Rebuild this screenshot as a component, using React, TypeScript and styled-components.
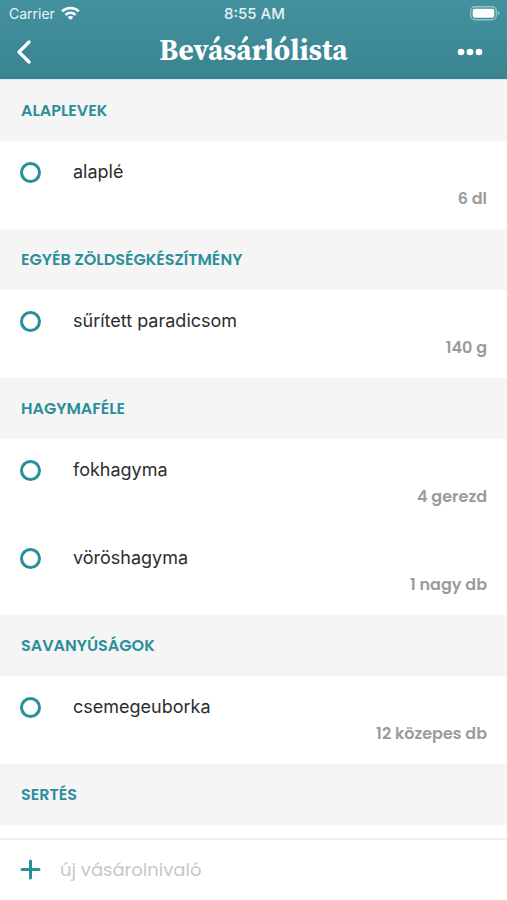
import React, { useState } from "react";
import styled, { createGlobalStyle } from "styled-components";

const teal = "#2b8f9a";
const brandFont = `Poppins, Inter, "Noto Sans", sans-serif`;
const systemFont = `Inter, "Noto Sans", sans-serif`;

const GlobalStyle = createGlobalStyle`
  *, *::before, *::after { box-sizing: border-box; }
  body { margin: 0; background: #fff; font-family: ${systemFont}; }
  button, input { font: inherit; }
`;

const Screen = styled.div`
  display: flex;
  flex-direction: column;
  height: 100vh;
  overflow: hidden;
`;

const Header = styled.header`
  flex: none;
  color: #fff;
  background: linear-gradient(#44919f, #3a8491);
  border-bottom: 1px solid #d5eaed;
`;

const StatusBar = styled.div`
  display: grid;
  grid-template-columns: 1fr auto 1fr;
  align-items: center;
  height: 27px;
  padding: 0 7px 0 9px;
  color: #e6f3f5;
`;

const Carrier = styled.span`
  display: flex;
  align-items: center;
  gap: 6px;
  font-size: 14px;
`;

const Clock = styled.time`
  font-size: 15px;
  font-weight: 500;
`;

const BatteryIcon = styled.svg`
  justify-self: end;
`;

const TitleBar = styled.div`
  display: grid;
  grid-template-columns: 48px 1fr 48px;
  align-items: center;
  height: 52px;
  padding: 0 8px 2px;
`;

const Title = styled.h1`
  margin: 0;
  padding-bottom: 4px;
  text-align: center;
  font-family: "Source Serif 4", "Source Serif Pro", "Source Serif", "Noto Serif", "Liberation Serif", serif;
  font-size: 29px;
  line-height: 40px;
  font-weight: 700;
`;

const IconButton = styled.button`
  display: flex;
  align-items: center;
  justify-content: center;
  width: 32px;
  height: 40px;
  padding: 0;
  border: 0;
  color: inherit;
  background: none;
  cursor: pointer;
`;

const MenuButton = styled(IconButton)`
  justify-self: end;
  justify-content: flex-start;
  width: 42px;
`;

const List = styled.main`
  flex: 1;
  min-height: 0;
  overflow-y: auto;
  scrollbar-width: none;
`;

const GroupTitle = styled.h2`
  display: flex;
  align-items: center;
  height: 61px;
  margin: 0;
  padding: 0 20px 0 21px;
  font-family: ${brandFont};
  font-size: 16px;
  font-weight: 600;
  text-transform: uppercase;
  color: ${teal};
  background: #f5f5f5;
`;

const Items = styled.ul`
  margin: 0;
  padding: 0;
  list-style: none;
`;

const Item = styled.li`
  display: flex;
  flex-direction: column;
  gap: 5px;
  padding: 20px 20px 19px;
`;

const ItemLabel = styled.label`
  display: flex;
  align-items: center;
  gap: 32px;
  font-size: 18px;
  line-height: 22px;
  color: #2d2d2d;
  cursor: pointer;
`;

const Check = styled.input`
  appearance: none;
  flex: none;
  width: 21px;
  height: 21px;
  margin: 0;
  border: 3px solid ${teal};
  border-radius: 50%;
  cursor: pointer;
  &:checked {
    background: ${teal};
  }
`;

const Quantity = styled.span`
  align-self: flex-end;
  font-family: ${brandFont};
  font-size: 16px;
  line-height: 22px;
  font-weight: 600;
  color: #9b9b9b;
`;

const AddBar = styled.form`
  flex: none;
  display: flex;
  align-items: center;
  gap: 19px;
  height: 62px;
  padding: 0 20px 2px;
  border-top: 2px solid #efefef;
  background: #fff;
`;

const AddButton = styled(IconButton)`
  width: 21px;
  color: ${teal};
`;

const AddInput = styled.input`
  flex: 1;
  min-width: 0;
  height: 40px;
  padding: 0;
  border: 0;
  outline: 0;
  font-family: ${brandFont};
  font-size: 18px;
  font-weight: 400;
  color: #2d2d2d;
  background: none;
  &::placeholder {
    color: #c8c8c8;
    opacity: 1;
  }
`;

type Entry = { name: string; amount: string };

const groups: { title: string; items: Entry[] }[] = [
  { title: "Alaplevek", items: [{ name: "alaplé", amount: "6 dl" }] },
  { title: "Egyéb zöldségkészítmény", items: [{ name: "sűrített paradicsom", amount: "140 g" }] },
  {
    title: "Hagymaféle",
    items: [
      { name: "fokhagyma", amount: "4 gerezd" },
      { name: "vöröshagyma", amount: "1 nagy db" },
    ],
  },
  { title: "Savanyúságok", items: [{ name: "csemegeuborka", amount: "12 közepes db" }] },
  { title: "Sertés", items: [] },
];

export default function App() {
  const [draft, setDraft] = useState("");
  return (
    <Screen>
      <GlobalStyle />
      <Header>
        <StatusBar>
          <Carrier>
            Carrier
            <svg width="19" height="15" viewBox="0 0 19 15" fill="none" stroke="#fff" strokeWidth="2.5" aria-hidden="true">
              <path d="M1.2 5.4C5.8 1 13.2 1 17.8 5.4" />
              <path d="M4.5 8.8C7.3 6.2 11.7 6.2 14.5 8.8" />
              <path d="M9.5 14 6.6 11.1C8.2 9.7 10.8 9.7 12.4 11.1Z" fill="#fff" stroke="none" />
            </svg>
          </Carrier>
          <Clock>8:55 AM</Clock>
          <BatteryIcon width="30" height="15" viewBox="0 0 30 15" aria-hidden="true">
            <rect x="0.75" y="0.75" width="25.5" height="13" rx="4" fill="none" stroke="#fff" strokeOpacity="0.45" strokeWidth="1.3" />
            <rect x="2.7" y="2.7" width="21.6" height="9.1" rx="2" fill="#fff" />
            <path d="M27.7 5.2C30 5.8 30 8.7 27.7 9.3Z" fill="#fff" fillOpacity="0.5" />
          </BatteryIcon>
        </StatusBar>
        <TitleBar>
          <IconButton type="button" aria-label="Vissza">
            <svg width="16" height="24" viewBox="0 0 16 24" fill="none" stroke="currentColor" strokeWidth="3.2" strokeLinecap="round" strokeLinejoin="round">
              <path d="M13 2 3 12 13 22" />
            </svg>
          </IconButton>
          <Title>Bevásárlólista</Title>
          <MenuButton type="button" aria-label="Továbbiak">
            <svg width="26" height="8" viewBox="0 0 26 8" fill="currentColor">
              <circle cx="4" cy="4" r="3.3" />
              <circle cx="13" cy="4" r="3.3" />
              <circle cx="22" cy="4" r="3.3" />
            </svg>
          </MenuButton>
        </TitleBar>
      </Header>
      <List>
        {groups.map((group) => (
          <section key={group.title}>
            <GroupTitle>{group.title}</GroupTitle>
            <Items>
              {group.items.map((item) => (
                <Item key={item.name}>
                  <ItemLabel>
                    <Check type="checkbox" />
                    {item.name}
                  </ItemLabel>
                  <Quantity>{item.amount}</Quantity>
                </Item>
              ))}
            </Items>
          </section>
        ))}
      </List>
      <AddBar onSubmit={(event) => event.preventDefault()}>
        <AddButton type="submit" aria-label="Hozzáadás">
          <svg width="21" height="21" viewBox="0 0 21 21" fill="none" stroke="currentColor" strokeWidth="3" strokeLinecap="round">
            <path d="M10.5 2V19M2 10.5H19" />
          </svg>
        </AddButton>
        <AddInput
          aria-label="új vásárolnivaló"
          placeholder="új vásárolnivaló"
          value={draft}
          onChange={(event) => setDraft(event.target.value)}
        />
      </AddBar>
    </Screen>
  );
}
